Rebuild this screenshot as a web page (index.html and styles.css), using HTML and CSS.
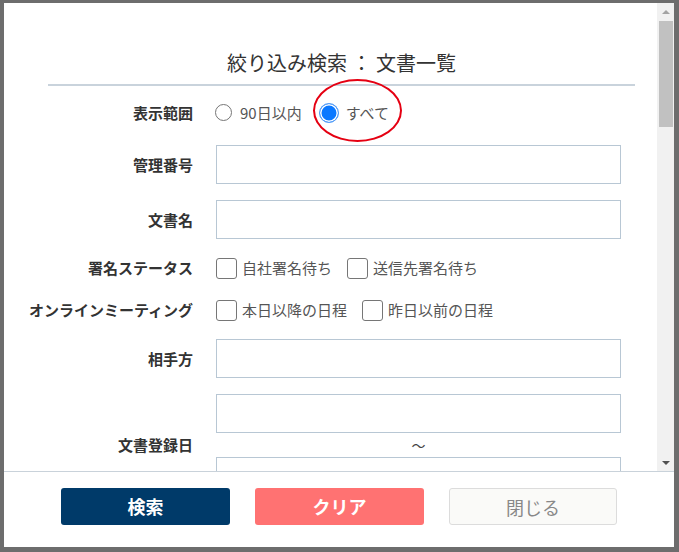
FILE: index.html
```html
<!DOCTYPE html>
<html lang="ja">
<head>
    <meta charset="UTF-8">
    <title>絞り込み検索</title>
    <link rel="stylesheet" href="styles.css">
</head>
<body>

<div class="modal">
    <div class="modal-body">
        <div class="modal-scroll">
            <div class="head">
                <h2 class="title">絞り込み検索 ： 文書一覧</h2>
            </div>

            <form class="search-form">
                <div class="label">表示範囲</div>
                <div class="field options radios">
                    <label class="opt"><span class="radio"></span>90日以内</label>
                    <label class="opt marked"><span class="radio checked"></span>すべて<span class="mark"></span></label>
                </div>

                <div class="label">管理番号</div>
                <div class="field"><input class="text" type="text"></div>

                <div class="label">文書名</div>
                <div class="field"><input class="text" type="text"></div>

                <div class="label">署名ステータス</div>
                <div class="field options">
                    <label class="opt"><span class="check"></span>自社署名待ち</label>
                    <label class="opt"><span class="check"></span>送信先署名待ち</label>
                </div>

                <div class="label">オンラインミーティング</div>
                <div class="field options">
                    <label class="opt"><span class="check"></span>本日以降の日程</label>
                    <label class="opt"><span class="check"></span>昨日以前の日程</label>
                </div>

                <div class="label">相手方</div>
                <div class="field"><input class="text" type="text"></div>

                <div class="label">文書登録日</div>
                <div class="field range">
                    <input class="text" type="text">
                    <div class="tilde">～</div>
                    <input class="text" type="text">
                </div>
            </form>
        </div>

        <div class="scrollbar">
            <div class="sb-btn"><span class="arrow up"></span></div>
            <div class="sb-thumb"></div>
            <div class="sb-track"></div>
            <div class="sb-btn"><span class="arrow down"></span></div>
        </div>
    </div>

    <div class="modal-footer">
        <button class="btn btn-search" type="button">検索</button>
        <button class="btn btn-clear" type="button">クリア</button>
        <button class="btn btn-close" type="button">閉じる</button>
    </div>
</div>

</body>
</html>
```

FILE: styles.css
```css
html, body {
    margin: 0;
    padding: 0;
    height: 100%;
}

body {
    background-color: #6d6d6d;
    padding: 3px 5px 5px 4px;
    box-sizing: border-box;
    font-family: "Noto Sans CJK JP", "Noto Sans", sans-serif;
    color: #333;
}

.modal {
    width: 670px;
    height: 544px;
    background-color: #fff;
    display: flex;
    flex-direction: column;
}

.modal-body {
    height: 468px;
    display: flex;
    flex-direction: row;
}

.modal-scroll {
    flex: 1;
    overflow: hidden;
    padding-top: 47px;
}

/* タイトル */
.head {
    margin: 0 22px 0 44px;
    border-bottom: 2px solid #c9d3dc;
    padding-bottom: 8px;
}

.title {
    margin: 0;
    font-size: 20px;
    font-weight: normal;
    line-height: 26px;
    text-align: center;
    color: #333;
}

/* フォーム */
.search-form {
    display: grid;
    grid-template-columns: 169px 405px;
    column-gap: 23px;
    row-gap: 16px;
    margin: 10px 0 0 20px;
}

.label {
    align-self: center;
    text-align: right;
    font-size: 15px;
    font-weight: bold;
    line-height: 22px;
    color: #333;
    white-space: nowrap;
}

.field {
    display: flex;
}

.text {
    display: block;
    width: 100%;
    height: 39px;
    box-sizing: border-box;
    border: 1px solid #b8c7d4;
    border-radius: 0;
    margin: 0;
    padding: 0 8px;
    font-family: inherit;
    font-size: 15px;
    outline: none;
}

.options {
    align-items: center;
    min-height: 26px;
}

.options.radios {
    min-height: 33px;
    margin-left: -1px;
}

.opt {
    display: flex;
    align-items: center;
    font-size: 15px;
    line-height: 22px;
    color: #555;
    margin-right: 15px;
    white-space: nowrap;
}

.radios .opt {
    margin-right: 17px;
}

.radio {
    width: 17px;
    height: 17px;
    box-sizing: border-box;
    border: 1px solid #767676;
    border-radius: 50%;
    background-color: #fff;
    margin-right: 8px;
}

.radio.checked {
    width: 20px;
    height: 20px;
    border: 1.5px solid #5a9ff5;
    background-color: #0a78ff;
    box-shadow: inset 0 0 0 1.5px #fff;
    margin-right: 7px;
}

.check {
    width: 21px;
    height: 21px;
    box-sizing: border-box;
    border: 1px solid #767676;
    border-radius: 3px;
    background-color: #fff;
    margin-right: 5px;
}

/* 赤丸の注記 */
.marked {
    position: relative;
}

.mark {
    position: absolute;
    left: -6px;
    top: -23px;
    width: 89px;
    height: 63px;
    box-sizing: border-box;
    border: 2px solid #e50012;
    border-radius: 50%;
}

.range {
    flex-direction: column;
}

.tilde {
    height: 24px;
    line-height: 24px;
    text-align: center;
    font-size: 14px;
    color: #444;
}

/* スクロールバー */
.scrollbar {
    width: 17px;
    background-color: #f1f1f1;
    display: flex;
    flex-direction: column;
}

.sb-btn {
    height: 17px;
    display: flex;
    align-items: center;
    justify-content: center;
}

.arrow {
    width: 0;
    height: 0;
    border-left: 4px solid transparent;
    border-right: 4px solid transparent;
}

.arrow.up {
    border-bottom: 4px solid #a3a3a3;
}

.arrow.down {
    border-top: 4px solid #505050;
}

.sb-thumb {
    height: 106px;
    margin: 1px 1px 0 2px;
    background-color: #c1c1c1;
}

.sb-track {
    flex: 1;
}

/* フッター */
.modal-footer {
    flex: 1;
    border-top: 1px solid #c9d2da;
    display: flex;
    justify-content: center;
    align-items: flex-start;
    padding-top: 16px;
    gap: 25px;
}

.btn {
    width: 169px;
    height: 37px;
    border-radius: 3px;
    border: none;
    font-family: inherit;
    font-size: 18px;
    line-height: 37px;
    padding: 0;
    cursor: pointer;
}

.btn-search {
    background-color: #003a69;
    color: #fff;
    font-weight: bold;
}

.btn-clear {
    background-color: #ff7272;
    color: #fff;
    font-weight: bold;
}

.btn-close {
    width: 168px;
    background-color: #fafaf8;
    border: 1px solid #dcdcdc;
    color: #888;
}
```
